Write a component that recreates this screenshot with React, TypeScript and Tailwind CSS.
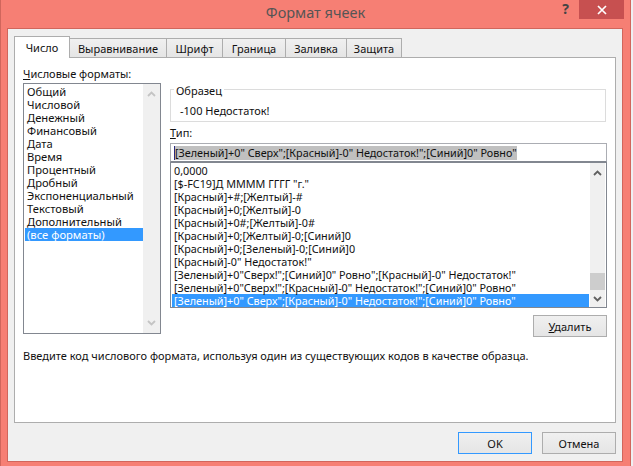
import React from 'react';

const font = { fontFamily: '"Noto Sans", sans-serif' };

const tabs = ['Выравнивание', 'Шрифт', 'Граница', 'Заливка', 'Защита'];
const tabWidths = ['w-[98px]', 'w-[57px]', 'w-[64px]', 'w-[62px]', 'w-[56px]'];

const categories = [
  'Общий',
  'Числовой',
  'Денежный',
  'Финансовый',
  'Дата',
  'Время',
  'Процентный',
  'Дробный',
  'Экспоненциальный',
  'Текстовый',
  'Дополнительный',
];

const formats = [
  '0,0000',
  '[$-FC19]Д ММММ ГГГГ "г."',
  '[Красный]+#;[Желтый]-#',
  '[Красный]+0;[Желтый]-0',
  '[Красный]+0#;[Желтый]-0#',
  '[Красный]+0;[Желтый]-0;[Синий]0',
  '[Красный]+0;[Зеленый]-0;[Синий]0',
  '[Красный]-0" Недостаток!"',
  '[Зеленый]+0"Сверх!";[Синий]0" Ровно";[Красный]-0" Недостаток!"',
  '[Зеленый]+0"Сверх!";[Красный]-0" Недостаток!";[Синий]0" Ровно"',
];

const current = '[Зеленый]+0" Сверх";[Красный]-0" Недостаток!";[Синий]0" Ровно"';

const Up = ({ color }: { color: string }) => (
  <svg width="9" height="6" viewBox="0 0 9 6" fill="none" stroke={color} strokeWidth="1.8">
    <path d="M1 5l3.5-3.5L8 5" />
  </svg>
);

const Down = ({ color }: { color: string }) => (
  <svg width="9" height="6" viewBox="0 0 9 6" fill="none" stroke={color} strokeWidth="1.8">
    <path d="M1 1l3.5 3.5L8 1" />
  </svg>
);

const Btn = ({ children, focus }: { children: React.ReactNode; focus?: boolean }) => (
  <div
    className={`w-[74px] h-[22px] flex items-center justify-center border bg-gradient-to-b from-[#f0f0f0] to-[#e5e5e5] text-[11px] text-[#111] ${
      focus ? 'border-[#3399ff]' : 'border-[#adadad]'
    }`}
  >
    {children}
  </div>
);

export default function App() {
  return (
    <div style={font} className="w-[633px] h-[466px] flex overflow-hidden text-[11px] leading-[13px] text-[#111]">
      <div className="w-[631px] h-full bg-[#f67f74] flex flex-col border-x border-[#d0665c]">
        <div className="h-[28px] shrink-0 relative">
          <div className="w-full text-center text-[14.5px] leading-[25px] text-[#555]">Формат ячеек</div>
          <div className="absolute top-[1px] right-[61px] font-bold text-[14px] leading-[16px] text-[#444]">?</div>
          <div className="absolute top-0 right-[6px] w-[45px] h-[19px] bg-[#c75050] flex items-center justify-center">
            <svg width="10" height="10" viewBox="0 0 10 10" stroke="#fff" strokeWidth="1.7">
              <path d="M1 1l8 8M9 1l-8 8" />
            </svg>
          </div>
        </div>

        <div className="ml-[6px] w-[616px] h-[434px] border border-[#d0665c] bg-[#f0f0f0] flex flex-col">
          <div className="flex h-[28px] pl-[6px] items-end shrink-0">
            <div className="w-[56px] h-[22px] bg-white border border-b-0 border-[#adadad] flex justify-center pt-[4px] relative z-10 -mb-px">
              Число
            </div>
            {tabs.map((t, i) => (
              <div
                key={t}
                className={`${tabWidths[i]} h-[19px] -ml-px bg-gradient-to-b from-[#f0f0f0] to-[#e5e5e5] border border-b-0 border-[#adadad] flex justify-center pt-[3px]`}
              >
                {t}
              </div>
            ))}
          </div>

          <div className="ml-[6px] w-[602px] h-[366px] bg-white border border-[#adadad] px-[8px] pt-[9px] flex flex-col">
            <div className="flex gap-[9px] h-[270px]">
              <div className="w-[138px]">
                <div className="h-[16px]">
                  <span className="underline">Ч</span>исловые форматы:
                </div>
                <div className="h-[251px] border border-[#828790] flex pl-px">
                  <div className="flex-1 pt-[1px] text-[11.2px]">
                    {categories.map((c) => (
                      <div key={c} className="h-[13px] pl-[2px] whitespace-nowrap">
                        {c}
                      </div>
                    ))}
                    <div className="h-[13px] pl-[2px] bg-[#3399ff] text-white">(все форматы)</div>
                  </div>
                  <div className="w-[17px] bg-[#f0f0f0] flex flex-col justify-between items-center py-[7px]">
                    <Up color="#c4c4c4" />
                    <Down color="#c4c4c4" />
                  </div>
                </div>
              </div>

              <div className="w-[437px] pt-[22px]">
                <div className="relative h-[33px] border border-[#dcdcdc] pl-[9px] pt-[14px] w-[436px] mb-[4px]">
                  <span className="absolute -top-[6px] left-[3px] px-[2px] bg-white">Образец</span>
                  -100 Недостаток!
                </div>
                <div className="h-[13px]">
                  <span className="underline">Т</span>ип:
                </div>
                <div className="h-[19px] mt-[4px] border border-[#abadb3] border-b-[#828790] flex items-center pl-[3px] whitespace-nowrap text-[10.8px]">
                  <span className="bg-[#c0c0c0] border-l border-[#2a2a80] h-[14px] text-[#111]">{current}</span>
                </div>
                <div className="h-[146px] border border-[#828790] flex pl-px text-[10.8px]">
                  <div className="flex-1 min-w-0 pt-px">
                    {formats.map((f) => (
                      <div key={f} className="h-[13px] pl-[2px] whitespace-nowrap">
                        {f}
                      </div>
                    ))}
                    <div className="h-[13px] pl-[2px] bg-[#3399ff] text-white whitespace-nowrap">{current}</div>
                  </div>
                  <div className="w-[15px] ml-px mr-px bg-[#f0f0f0] flex flex-col items-center pt-[7px]">
                    <Up color="#606060" />
                    <div className="w-[15px] h-[17px] mt-[97px] bg-[#cdcdcd]" />
                    <div className="mt-[6px] leading-[6px]">
                      <Down color="#606060" />
                    </div>
                  </div>
                </div>
                <div className="flex justify-end mt-[7px]">
                  <Btn>
                    <span>
                      <span className="underline">У</span>далить
                    </span>
                  </Btn>
                </div>
              </div>
            </div>
            <div className="mt-[12px] whitespace-nowrap">
              Введите код числового формата, используя один из существующих кодов в качестве образца.
            </div>
          </div>

          <div className="flex justify-end gap-[10px] pr-[6px] pt-[9px]">
            <Btn focus>OK</Btn>
            <Btn>Отмена</Btn>
          </div>
        </div>
      </div>
      <div className="flex-1 bg-[#eef0f2]" />
    </div>
  );
}
